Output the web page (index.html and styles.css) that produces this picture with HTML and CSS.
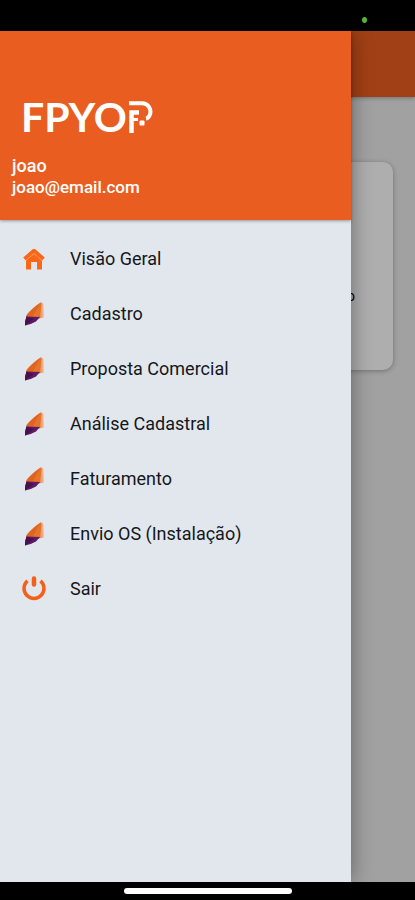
FILE: index.html
```html
<!DOCTYPE html>
<html lang="pt-BR">
<head>
    <meta charset="UTF-8">
    <meta name="viewport" content="width=device-width, initial-scale=1">
    <title>FPYOP</title>
    <link rel="stylesheet" href="styles.css">
</head>
<body>
    <svg class="sprite" aria-hidden="true">
        <defs>
            <linearGradient id="leafFade" x1="0" y1="0" x2="1" y2="0">
                <stop offset="0" stop-color="#e8782c"/>
                <stop offset="0.5" stop-color="#ec8a48"/>
                <stop offset="1" stop-color="#f0c4a6"/>
            </linearGradient>
        </defs>
        <symbol id="leaf" viewBox="0 0 24 26">
            <path d="M15 5L19 1.500Q21.500 1 21.500 4L22 16.500L17 17.500L14 16Z" fill="url(#leafFade)"/>
            <path d="M18.500 1.500Q10 7 4.500 14L4 17H17.500L19 2Z" fill="#e06420"/>
            <path d="M18.500 1.500L10 17H17.500L19.500 3Z" fill="#e5752c"/>
            <path d="M4.500 15.500L18 16L14 20.500Q10 23 3 24.500Q3 19 4.500 15.500Z" fill="#5e1a66"/>
            <path d="M4.500 15.500L12 18L3 24.500Q3 19 4.500 15.500Z" fill="#48104f"/>
        </symbol>
    </svg>

    <div class="status-bar"><span class="camera-dot"></span></div>

    <div class="screen">
        <main class="page">
            <header class="app-bar"></header>
            <section class="card"><p>o</p></section>
        </main>
        <div class="scrim"></div>

        <aside class="drawer">
            <header class="drawer-header">
                <div class="logo">
                    <span>FPYO</span>
                    <svg viewBox="0 0 24 32" aria-hidden="true">
                        <path d="M0 2.200H13A8.500 8.500 0 0 1 20.500 14.500Q19.500 17 17 17.500" fill="none" stroke="#fff" stroke-width="4"/>
                        <path d="M2.500 32V11.500H10" fill="none" stroke="#fff" stroke-width="4.500"/>
                        <path d="M2.500 18.500H9" stroke="#fff" stroke-width="3"/>
                        <rect x="10.500" y="19.500" width="5" height="5" rx="1" fill="#fff"/>
                    </svg>
                </div>
                <p class="user-name">joao</p>
                <p class="user-email">joao@email.com</p>
            </header>

            <nav class="menu">
                <a href="#">
                    <svg viewBox="0 0 24 26" aria-hidden="true">
                        <path d="M2.500 13L12 4.800L21.500 13" fill="none" stroke="#fb6717" stroke-width="4" stroke-linejoin="round"/>
                        <path d="M4 14.500L12 7.800L20 14.500V23.500H15V16H9V23.500H4Z" fill="#fb6717"/>
                        <path d="M4 14.500L12 7.500L20 14.500" fill="none" stroke="#f9935c" stroke-width="0.800"/>
                    </svg>
                    Visão Geral
                </a>
                <a href="#"><svg><use href="#leaf"/></svg>Cadastro</a>
                <a href="#"><svg><use href="#leaf"/></svg>Proposta Comercial</a>
                <a href="#"><svg><use href="#leaf"/></svg>Análise Cadastral</a>
                <a href="#"><svg><use href="#leaf"/></svg>Faturamento</a>
                <a href="#"><svg><use href="#leaf"/></svg>Envio OS (Instalação)</a>
                <a href="#">
                    <svg viewBox="0 0 24 26" aria-hidden="true">
                        <path d="M5.500 4.800A10 10 0 1 0 18.500 4.800" fill="none" stroke="#f2601c" stroke-width="3.500"/>
                        <path d="M12 2.500V8.500" stroke="#f2601c" stroke-width="4.500" stroke-linecap="round"/>
                    </svg>
                    Sair
                </a>
            </nav>
        </aside>
    </div>

    <div class="gesture-bar"><span></span></div>
</body>
</html>
```

FILE: styles.css
```css
* {
    box-sizing: border-box;
}
body {
    display: flex;
    flex-direction: column;
    min-height: 100vh;
    margin: 0;
    background-color: #000;
    font-family: Roboto, "Liberation Sans", sans-serif;
}
p {
    margin: 0;
}
.sprite {
    position: absolute;
    width: 0;
    height: 0;
}
.status-bar {
    display: flex;
    justify-content: flex-end;
    align-items: flex-end;
    height: 31px;
    padding: 8px 48px;
}
.camera-dot {
    width: 5px;
    height: 6px;
    border-radius: 50%;
    background-color: #55b435;
}
.screen {
    position: relative;
    flex: 1;
    display: flex;
    overflow: hidden;
}
.page {
    flex: 1;
    background-color: #e9e9e9;
}
.app-bar {
    height: 66px;
    background-color: #e95e20;
    box-shadow: 0 1px 4px rgba(0, 0, 0, 0.3);
}
.card {
    height: 208px;
    margin: 65px 22px;
    padding: 125px 38px 0;
    border-radius: 10px;
    background-color: #fdfdfd;
    box-shadow: 0 1px 5px rgba(0, 0, 0, 0.3);
    font-size: 14px;
    line-height: 18px;
    text-align: right;
}
.scrim {
    position: absolute;
    inset: 0;
    background-color: rgba(0, 0, 0, 0.31);
}
.drawer {
    position: absolute;
    top: 0;
    bottom: 0;
    left: 0;
    width: calc(100% - 64px);
    background-color: #e2e7ee;
    box-shadow: 0 0 20px rgba(0, 0, 0, 0.4);
}
.drawer-header {
    padding: 65px 12px 22px;
    background-color: #e95e20;
    box-shadow: 0 1px 3px rgba(0, 0, 0, 0.35);
    color: #fff;
}
.logo {
    display: flex;
    align-items: center;
    height: 42px;
    margin-bottom: 17px;
    padding-left: 9px;
    font-family: Lato, sans-serif;
    font-size: 41px;
    font-weight: 700;
    line-height: 42px;
}
.logo svg {
    width: 24px;
    height: 32px;
    margin-left: 2px;
}
.user-name {
    font-size: 18px;
    font-weight: 500;
    line-height: 22px;
}
.user-email {
    font-size: 17px;
    font-weight: 500;
    line-height: 21px;
}
.menu {
    padding-top: 11px;
}
.menu a {
    display: flex;
    align-items: center;
    gap: 24px;
    height: 55px;
    padding: 0 22px;
    color: #15171a;
    font-size: 18px;
    text-decoration: none;
}
.menu svg {
    width: 24px;
    height: 26px;
}
.gesture-bar {
    display: flex;
    justify-content: center;
    height: 18px;
    padding-top: 6px;
}
.gesture-bar span {
    width: 168px;
    height: 6px;
    border-radius: 3px;
    background-color: #fff;
}
```
